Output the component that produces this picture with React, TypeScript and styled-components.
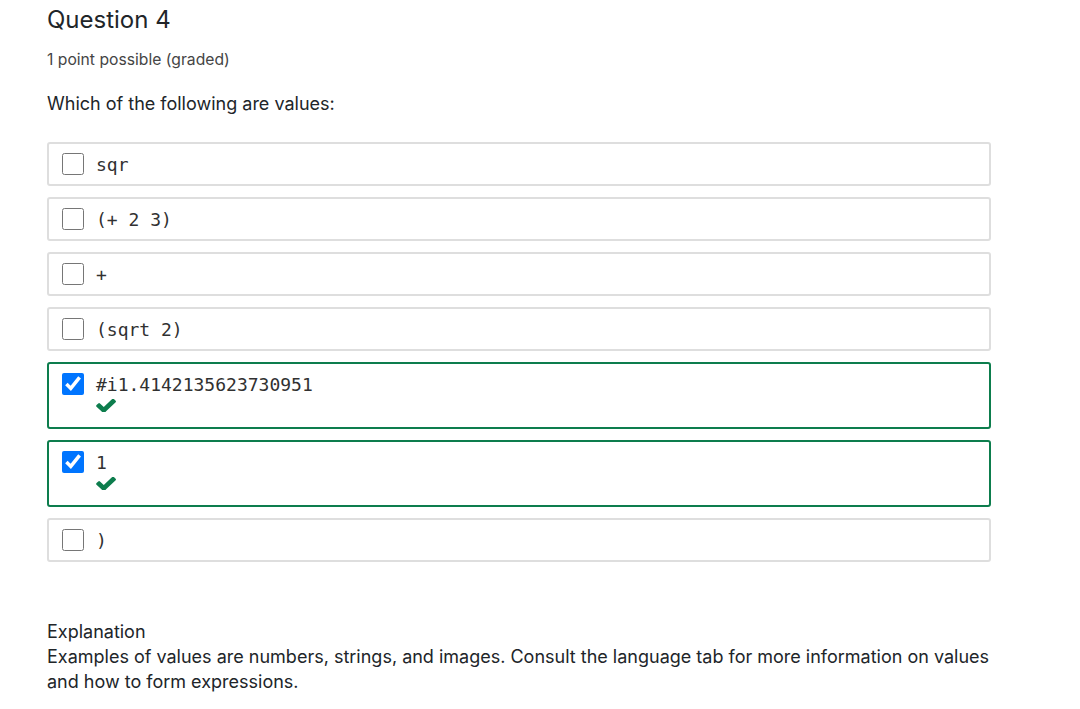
import React from "react";
import styled, { createGlobalStyle } from "styled-components";

const Global = createGlobalStyle`
  html, body { margin: 0; padding: 0; background: #fff; }
  body { font-family: Inter, "Noto Sans", sans-serif; color: #212529; }
`;

const Page = styled.div`
  padding: 5px 0 0 47px;
  width: 944px;
`;

const Title = styled.h3`
  margin: 0;
  font-size: 24px;
  font-weight: 400;
  line-height: 30px;
  color: #212529;
`;

const Meta = styled.div`
  margin-top: 14px;
  font-size: 15.7px;
  line-height: 22px;
  color: #454545;
`;

const Prompt = styled.p`
  margin: 20px 0 0;
  font-size: 18px;
  line-height: 26px;
  color: #212529;
`;

const Options = styled.div`
  margin-top: 25px;
  display: flex;
  flex-direction: column;
  gap: 11px;
`;

const Option = styled.label<{ $correct?: boolean }>`
  display: flex;
  align-items: flex-start;
  gap: 12px;
  min-height: 44px;
  box-sizing: border-box;
  padding: 9px 13px;
  border: 2px solid ${(p) => (p.$correct ? "#0d7d4d" : "#dedede")};
  border-radius: 3px;
  cursor: pointer;
`;

const Box = styled.input`
  width: 22px;
  height: 22px;
  margin: 0;
  flex: none;
  accent-color: #0075ff;
`;

const Body = styled.div`
  display: flex;
  flex-direction: column;
`;

const Code = styled.span`
  font-family: "DejaVu Sans Mono", monospace;
  font-size: 18px;
  line-height: 21px;
  padding-top: 1px;
  color: #313131;
  white-space: pre;
`;

const Mark = styled.div`
  height: 23px;
  padding-top: 4px;
  box-sizing: border-box;
  color: #0d7d4d;
  display: flex;
  align-items: flex-start;
`;

const Explanation = styled.div`
  margin-top: 57px;
  font-size: 18px;
  line-height: 25px;
  color: #212529;
`;

const CheckIcon = () => (
  <svg width="20" height="13" viewBox="109 362 1562 1068" preserveAspectRatio="none" aria-hidden="true">
    <path
      fill="currentColor"
      d="M1671 566q0 40-28 68l-724 724-136 136q-28 28-68 28t-68-28l-136-136-362-362q-28-28-28-68t28-68l136-136q28-28 68-28t68 28l294 295 656-657q28-28 68-28t68 28l136 136q28 28 28 68z"
    />
  </svg>
);

const options: { text: string; checked: boolean }[] = [
  { text: "sqr", checked: false },
  { text: "(+ 2 3)", checked: false },
  { text: "+", checked: false },
  { text: "(sqrt 2)", checked: false },
  { text: "#i1.4142135623730951", checked: true },
  { text: "1", checked: true },
  { text: ")", checked: false },
];

export default function App() {
  return (
    <Page>
      <Global />
      <Title>Question 4</Title>
      <Meta>1 point possible (graded)</Meta>
      <Prompt>Which of the following are values:</Prompt>
      <Options>
        {options.map((o) => (
          <Option key={o.text} $correct={o.checked}>
            <Box type="checkbox" defaultChecked={o.checked} />
            <Body>
              <Code>{o.text}</Code>
              {o.checked && (
                <Mark>
                  <CheckIcon />
                </Mark>
              )}
            </Body>
          </Option>
        ))}
      </Options>
      <Explanation>
        <div>Explanation</div>
        <div>
          Examples of values are numbers, strings, and images. Consult the language tab for more
          information on values and how to form expressions.
        </div>
      </Explanation>
    </Page>
  );
}
